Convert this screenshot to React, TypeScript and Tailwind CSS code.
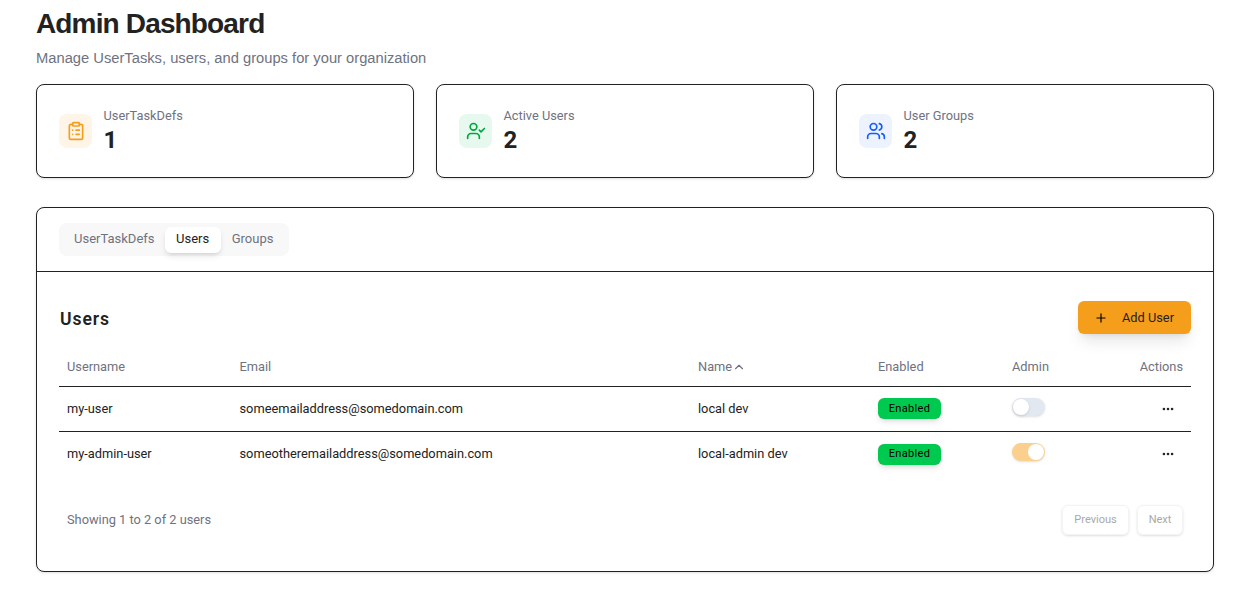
import React from "react";
import { ClipboardList, UserCheck, Users, Plus, ChevronUp, MoreHorizontal } from "lucide-react";

const Stat = ({ icon, bg, label, value }: { icon: React.ReactNode; bg: string; label: string; value: string }) => (
  <div className="flex h-[94px] items-center gap-[11.5px] rounded-lg border border-[#222222] bg-white px-[22px] shadow-sm">
    <div className={`flex h-[34px] w-[33px] items-center justify-center rounded-lg ${bg}`}>{icon}</div>
    <div className="flex flex-col">
      <span className="text-[12.8px] leading-[18px] text-[#6f7280]">{label}</span>
      <span className="text-[24px] font-bold leading-[30px] text-[#222222]">{value}</span>
    </div>
  </div>
);

const th = "h-[40px] px-2 pt-[2px] text-left align-middle text-[12.8px] font-normal text-[#6f7280]";
const td = "h-[45px] px-2 align-middle text-[12.8px] text-[#222222]";

const Row = ({ u, e, n, on }: { u: string; e: string; n: string; on: boolean }) => (
  <tr className="border-t border-[#222222]">
    <td className={td}>{u}</td>
    <td className={td}>{e}</td>
    <td className={td}>{n}</td>
    <td className={td}>
      <span className="inline-flex h-[21px] w-[63px] items-center justify-center rounded-md bg-[#00c950] text-[11px] font-normal tracking-[0.35px] text-black shadow-md">Enabled</span>
    </td>
    <td className={td}>
      {on ? (
        <span className="mb-[3px] flex h-[18px] w-[33px] items-center justify-end rounded-full bg-[#fbd08f] pr-[1px] shadow-sm">
          <span className="h-[16px] w-[16px] rounded-full bg-white" />
        </span>
      ) : (
        <span className="mb-[3px] flex h-[18px] w-[33px] items-center rounded-full bg-[#e2e8f0] pl-[1px] shadow-sm">
          <span className="h-[16px] w-[16px] rounded-full bg-white shadow-sm" />
        </span>
      )}
    </td>
    <td className={td}>
      <div className="flex justify-end pr-[8px]">
        <MoreHorizontal size={14} strokeWidth={2.5} className="text-[#222222]" />
      </div>
    </td>
  </tr>
);

export default function App() {
  return (
    <div className="min-h-[599px] bg-white px-[36px] pt-[6px] font-['Roboto',sans-serif]">
      <h1 className="font-['Liberation_Sans',Arial,sans-serif] text-[28px] font-bold leading-[36px] tracking-[-0.85px] text-[#222222]">Admin Dashboard</h1>
      <p className="mt-[6px] font-['Liberation_Sans',Arial,sans-serif] text-[14.72px] leading-[20px] text-[#6f7280]">Manage UserTasks, users, and groups for your organization</p>
      <div className="mt-[16px] grid grid-cols-3 gap-[22px]">
        <Stat bg="bg-[#fef5e8]" label="UserTaskDefs" value="1" icon={<ClipboardList size={20} className="text-[#f59e1c]" />} />
        <Stat bg="bg-[#e7f9ee]" label="Active Users" value="2" icon={<UserCheck size={20} className="text-[#00a63e]" />} />
        <Stat bg="bg-[#ecf3ff]" label="User Groups" value="2" icon={<Users size={20} className="text-[#155dfc]" />} />
      </div>
      <div className="mt-[29px] h-[365px] rounded-lg border border-[#222222] bg-white shadow-sm">
        <div className="flex h-[64px] items-center border-b border-[#222222] px-[22px]">
          <div className="flex h-[33px] items-center rounded-lg bg-[#f8f8f9] px-[4px] text-[13px] text-[#6f7280]">
            <span className="pb-[2px] pl-[11px] pr-[10px]">UserTaskDefs</span>
            <span className="flex h-[26px] items-center rounded-md bg-white px-[11.5px] pb-[2px] text-[#222222] shadow-md">Users</span>
            <span className="pb-[2px] pl-[11px] pr-[12px]">Groups</span>
          </div>
        </div>
        <div className="px-[22px] pt-[29px]">
          <div className="flex h-[33px] items-center justify-between">
            <h2 className="pl-[1px] pt-[3px] text-[17.6px] font-semibold tracking-[0.9px] text-[#222222]">Users</h2>
            <button className="flex h-[33px] w-[113px] items-center rounded-md bg-[#f59e1c] pl-[16px] text-[12.8px] font-normal text-[#222222] shadow-lg">
              <Plus size={14} strokeWidth={2} className="mr-[14px] text-black" />
              Add User
            </button>
          </div>
          <table className="mt-[12px] w-full table-fixed border-collapse">
            <colgroup>
              <col className="w-[172.5px]" />
              <col className="w-[458.5px]" />
              <col className="w-[180px]" />
              <col className="w-[134px]" />
              <col className="w-[90px]" />
              <col />
            </colgroup>
            <thead>
              <tr>
                <th className={th}>Username</th>
                <th className={th}>Email</th>
                <th className={th}>
                  <span className="flex items-center">Name <ChevronUp size={14} /></span>
                </th>
                <th className={th}>Enabled</th>
                <th className={th}>Admin</th>
                <th className={`${th} text-right`}>Actions</th>
              </tr>
            </thead>
            <tbody>
              <Row u="my-user" e="someemailaddress@somedomain.com" n="local dev" on={false} />
              <Row u="my-admin-user" e="someotheremailaddress@somedomain.com" n="local-admin dev" on={true} />
            </tbody>
          </table>
          <div className="mt-[29px] flex h-[30px] items-center justify-between pl-[8px] pr-[8px]">
            <span className="pb-[1px] text-[12.8px] text-[#6f7280]">Showing 1 to 2 of 2 users</span>
            <div className="flex gap-[8px]">
              <span className="flex h-[30px] w-[67px] items-center justify-center rounded-md border border-[#f3f3f3] text-[11px] text-[#a8a8a8] shadow-sm">Previous</span>
              <span className="flex h-[30px] w-[46px] items-center justify-center rounded-md border border-[#f3f3f3] text-[11px] text-[#a8a8a8] shadow-sm">Next</span>
            </div>
          </div>
        </div>
      </div>
    </div>
  );
}
